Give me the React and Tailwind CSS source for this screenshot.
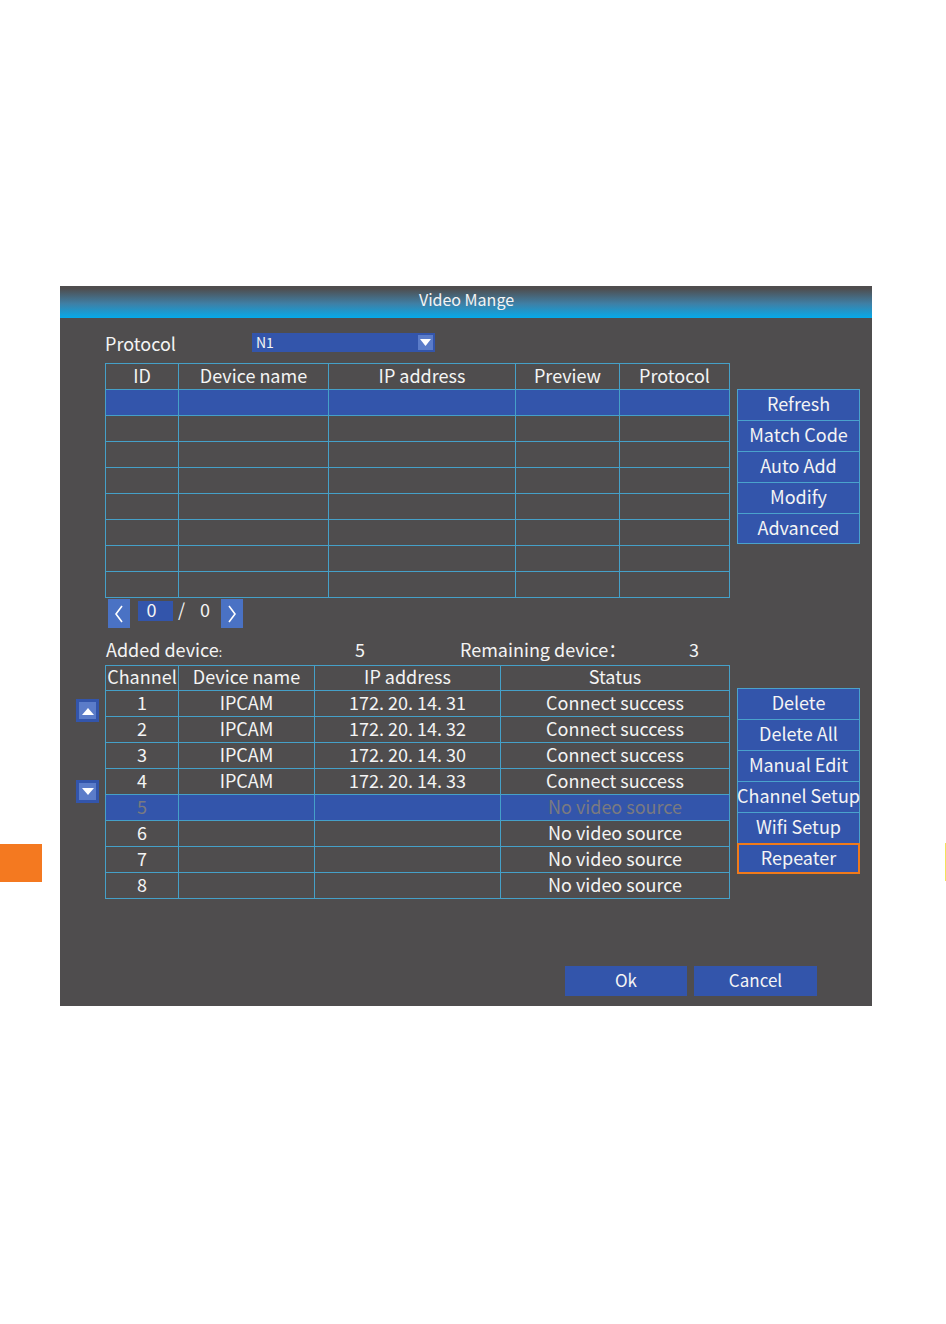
import React from "react";

const F = { fontFamily: '"Noto Sans CJK SC", "Noto Sans", sans-serif' };

function Btn({ children, orange }) {
  return (
    <div
      className={
        "h-[31px] w-[123px] flex items-center justify-center bg-[#3355ab] text-[18px] text-[#f4f4f4] leading-none whitespace-nowrap pb-[4px] " +
        (orange
          ? "border-2 border-[#f07a1a]"
          : "border-x border-t border-[#4aa2cc] last:border-b")
      }
    >
      {children}
    </div>
  );
}

function Tri({ up }) {
  return (
    <div className="w-[23px] h-[23px] bg-[#3355ab] flex items-center justify-center">
      <div className="w-[17px] h-[17px] bg-[#5b7cc9] flex items-center justify-center">
        <svg width="12" height="8" viewBox="0 0 12 8">
          {up ? (
            <polygon points="0,8 12,8 6,1" fill="#fff" />
          ) : (
            <polygon points="0,0 12,0 6,7" fill="#fff" />
          )}
        </svg>
      </div>
    </div>
  );
}

function Chevron({ left }) {
  return (
    <div className="w-[22px] h-[29px] bg-[#4a72c4] flex items-center justify-center">
      <svg width="10" height="18" viewBox="0 0 10 18">
        {left ? (
          <polyline points="8,1 2,9 8,17" fill="none" stroke="#fff" strokeWidth="1.6" />
        ) : (
          <polyline points="2,1 8,9 2,17" fill="none" stroke="#fff" strokeWidth="1.6" />
        )}
      </svg>
    </div>
  );
}

const topCols = ["ID", "Device name", "IP address", "Preview", "Protocol"];
const botCols = ["Channel", "Device name", "IP address", "Status"];

const botRows = [
  ["1", "IPCAM", "172. 20. 14. 31", "Connect success"],
  ["2", "IPCAM", "172. 20. 14. 32", "Connect success"],
  ["3", "IPCAM", "172. 20. 14. 30", "Connect success"],
  ["4", "IPCAM", "172. 20. 14. 33", "Connect success"],
  ["5", "", "", "No video source"],
  ["6", "", "", "No video source"],
  ["7", "", "", "No video source"],
  ["8", "", "", "No video source"],
];

export default function App() {
  return (
    <div className="w-[946px] h-[1324px] bg-white overflow-hidden" style={F}>
      <div className="flex pt-[286px]">
        {/* orange side tab */}
        <div className="w-[42px] h-[38px] mt-[558px] bg-[#f47920] shrink-0" />
        {/* panel */}
        <div className="ml-[18px] w-[812px] h-[720px] bg-[#4f4d4e] flex flex-col shrink-0 text-[#f4f4f4]">
          <div className="h-[32px] bg-[linear-gradient(to_bottom,#4f4d4e_8%,#3f7fa5_55%,#05aaea_100%)] flex items-center justify-center text-[16px] leading-none pb-[6px] pl-[1px]">
            Video Mange
          </div>

          {/* protocol row */}
          <div className="mt-[15px] h-[19px] flex items-center pl-[45px]">
            <div className="w-[147px] text-[18px] leading-none">Protocol</div>
            <div className="w-[183px] h-[19px] bg-[#3355ab] flex items-center justify-between pl-[4px] pr-[2px]">
              <span className="text-[14px] leading-none pb-[2px]">N1</span>
              <div className="w-[15px] h-[15px] bg-[#5b7cc9] flex items-center justify-center">
                <svg width="11" height="7" viewBox="0 0 11 7">
                  <polygon points="0,0 11,0 5.5,7" fill="#fff" />
                </svg>
              </div>
            </div>
          </div>

          {/* top table + buttons */}
          <div className="mt-[11px] flex pl-[45px]">
            <div className="w-[625px] grid grid-cols-[73px_150px_187px_104px_110px] border-l border-t border-[#45a0c8]">
              {topCols.map((c) => (
                <div
                  key={c}
                  className="h-[26px] border-r border-b border-[#45a0c8] flex items-center justify-center text-[18px] leading-none pb-[4px]"
                >
                  {c}
                </div>
              ))}
              {Array.from({ length: 8 }).map((_, r) =>
                topCols.map((c) => (
                  <div
                    key={r + c}
                    className={
                      "h-[26px] border-r border-b border-[#45a0c8] " +
                      (r === 0 ? "bg-[#3355ab]" : "")
                    }
                  />
                ))
              )}
            </div>
            <div className="ml-[7px] mt-[26px] flex flex-col">
              {["Refresh", "Match Code", "Auto Add", "Modify", "Advanced"].map((b) => (
                <Btn key={b}>{b}</Btn>
              ))}
            </div>
          </div>

          {/* pager */}
          <div className="mt-[1px] h-[29px] flex items-start pl-[48px]">
            <Chevron left />
            <div className="ml-[8px] mt-[2px] w-[35px] h-[20px] bg-[#3355ab] flex items-center justify-center text-[18px] leading-none pr-[8px] pb-[4px]">
              0
            </div>
            <div className="ml-[5px] mt-[2px] text-[18px] leading-none h-[20px] flex items-center pb-[4px]">/</div>
            <div className="ml-[15px] mt-[2px] text-[18px] leading-none h-[20px] flex items-center pb-[4px]">0</div>
            <div className="ml-[11px]">
              <Chevron />
            </div>
          </div>

          {/* counts */}
          <div className="mt-[12px] h-[20px] flex items-center pl-[46px] text-[18px] leading-none whitespace-nowrap pb-[3px]">
            <span className="w-[249px]">
              Added device<span className="text-[12px]">:</span>
            </span>
            <span className="w-[105px]">5</span>
            <span className="w-[229px]">Remaining device：</span>
            <span>3</span>
          </div>

          {/* bottom table */}
          <div className="mt-[5px] flex">
            <div className="w-[45px] pl-[16px] flex flex-col">
              <div className="mt-[34px]">
                <Tri up />
              </div>
              <div className="mt-[58px]">
                <Tri />
              </div>
            </div>
            <div className="w-[625px] grid grid-cols-[73px_136px_186px_229px] border-l border-t border-[#45a0c8]">
              {botCols.map((c) => (
                <div
                  key={c}
                  className="h-[25px] border-r border-b border-[#45a0c8] flex items-center justify-center text-[18px] leading-none pb-[4px]"
                >
                  {c}
                </div>
              ))}
              {botRows.map((row, r) =>
                row.map((cell, i) => (
                  <div
                    key={r + "-" + i}
                    className={
                      "h-[26px] border-r border-b border-[#45a0c8] flex items-center justify-center text-[18px] leading-none whitespace-nowrap pb-[4px] " +
                      (r === 4 ? "bg-[#3355ab] text-[#7a7a80]" : "")
                    }
                  >
                    {cell}
                  </div>
                ))
              )}
            </div>
            <div className="ml-[7px] mt-[23px] flex flex-col">
              {["Delete", "Delete All", "Manual Edit", "Channel Setup", "Wifi Setup"].map((b) => (
                <Btn key={b}>{b}</Btn>
              ))}
              <Btn orange>Repeater</Btn>
            </div>
          </div>

          {/* footer */}
          <div className="mt-[67px] flex pl-[505px] gap-[7px]">
            <div className="w-[122px] h-[30px] bg-[#3355ab] flex items-center justify-center text-[17px] leading-none pb-[4px]">
              Ok
            </div>
            <div className="w-[123px] h-[30px] bg-[#3355ab] flex items-center justify-center text-[17px] leading-none pb-[4px]">
              Cancel
            </div>
          </div>
        </div>
        <div className="ml-[73px] mt-[557px] w-[1px] h-[38px] bg-[#f3e35a] shrink-0" />
      </div>
    </div>
  );
}
